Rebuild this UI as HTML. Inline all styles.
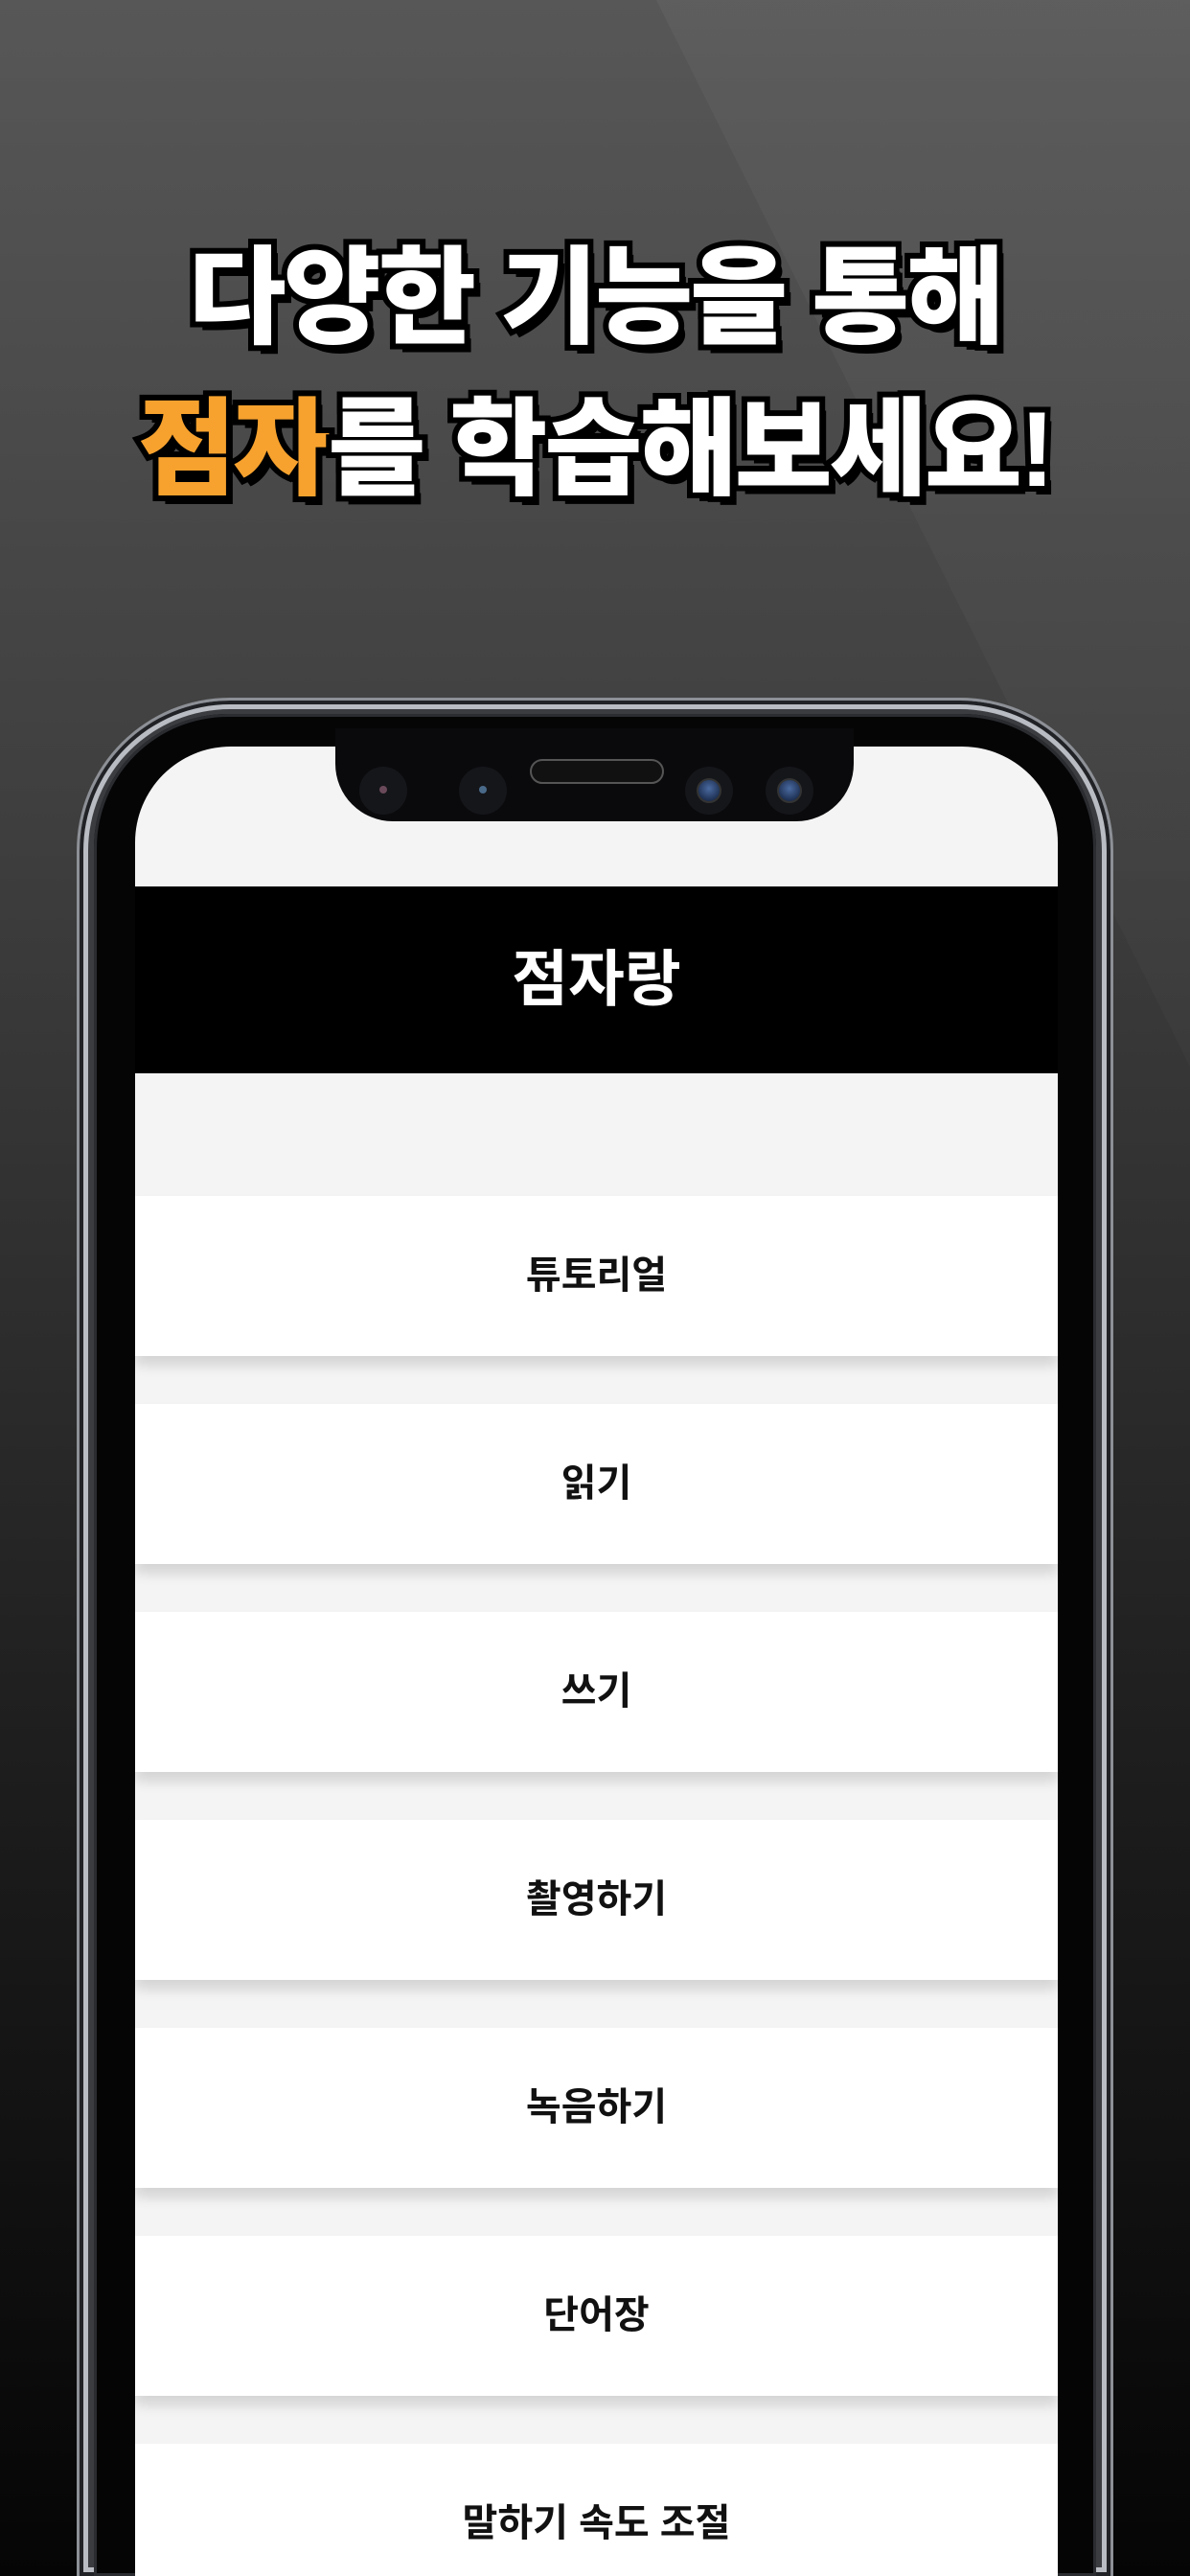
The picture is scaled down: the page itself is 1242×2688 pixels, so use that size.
<!DOCTYPE html>
<html style="overflow:hidden;width:1242px;height:2688px"><head><meta charset="utf-8"><style>
*{margin:0;padding:0;box-sizing:border-box}
body{width:1242px;height:2688px;overflow:hidden;position:relative;
background:linear-gradient(180deg,#575757 0%,#3c3c3c 35%,#1c1c1c 70%,#050505 100%);
font-family:"Liberation Sans","Noto Sans CJK KR",sans-serif}
.streak{position:absolute;left:0;top:0;width:1242px;height:1113px;background:linear-gradient(180deg,rgba(255,255,255,0.04),rgba(255,255,255,0.02));
clip-path:polygon(685px 0,1242px 0,1242px 1113px)}
.title{position:absolute;left:0;width:1242px;text-align:center;color:#fff;font-weight:900;font-size:111px;letter-spacing:-3px;line-height:1;
-webkit-text-stroke:12px #000;paint-order:stroke fill;text-shadow:7px 9px 0 #000}
.o{color:#f7a22e}
.phone{position:absolute;left:80px;top:728px;width:1082px;height:1960px;border-radius:160px 160px 0 0;
background:#3a3c40;border:3px solid #8d9096;border-bottom:none;box-shadow:inset 0 0 0 4px #202226,inset 0 0 0 9px #b9bcc2}
.bezel{position:absolute;left:98px;top:745px;width:1046px;height:1943px;border-radius:140px 140px 0 0;background:#050506;box-shadow:inset 0 0 0 3px #2a2c30}
.screen{position:absolute;left:141px;top:779px;width:963px;height:1909px;border-radius:100px 100px 0 0;background:#f4f4f4;overflow:hidden}
.notch{position:absolute;left:350px;top:760px;width:541px;height:97px;background:#0a0a0c;border-radius:0 0 60px 60px}
.cam{position:absolute;top:800px;border-radius:50%;background:#15161a}
.header{position:absolute;left:0;top:146px;width:963px;height:195px;background:#000;color:#fff;font-size:64px;font-weight:700;text-align:center;line-height:195px}
.item{position:absolute;left:0;width:963px;height:167px;background:#fff;text-align:center;line-height:167px;font-size:40px;font-weight:700;color:#111;
box-shadow:0 10px 12px rgba(0,0,0,0.13)}
</style></head><body>
<div class="streak"></div>
<div class="title" style="top:256px">다양한 기능을 통해</div>
<div class="title" style="top:414px"><span class="o">점자</span>를 학습해보세요!</div>
<div class="phone"></div>
<div class="bezel"></div>
<div class="screen">
<div class="header">점자랑</div>
<div class="item" style="top:469px">튜토리얼</div>
<div class="item" style="top:686px">읽기</div>
<div class="item" style="top:903px">쓰기</div>
<div class="item" style="top:1120px">촬영하기</div>
<div class="item" style="top:1337px">녹음하기</div>
<div class="item" style="top:1554px">단어장</div>
<div class="item" style="top:1771px;height:138px;box-shadow:none">말하기 속도 조절</div>
</div>
<div class="notch"></div>
<div class="cam" style="left:375px;width:50px;height:50px"></div>
<div class="cam" style="left:479px;width:50px;height:50px"></div>
<div style="position:absolute;left:396px;top:820px;width:8px;height:8px;border-radius:50%;background:#6a4a5a"></div>
<div style="position:absolute;left:500px;top:820px;width:8px;height:8px;border-radius:50%;background:#4a6a8a"></div>
<div style="position:absolute;left:553px;top:792px;width:140px;height:26px;border-radius:13px;background:#111;border:2px solid #555"></div>
<div class="cam" style="left:715px;width:50px;height:50px"></div>
<div class="cam" style="left:799px;width:50px;height:50px"></div>
<div style="position:absolute;left:727px;top:812px;width:26px;height:26px;border-radius:50%;background:radial-gradient(circle at 50% 40%,#4a6aa0,#0d1a35);border:2px solid #333"></div>
<div style="position:absolute;left:811px;top:812px;width:26px;height:26px;border-radius:50%;background:radial-gradient(circle at 50% 40%,#4a6aa0,#0d1a35);border:2px solid #333"></div>
</body></html>
